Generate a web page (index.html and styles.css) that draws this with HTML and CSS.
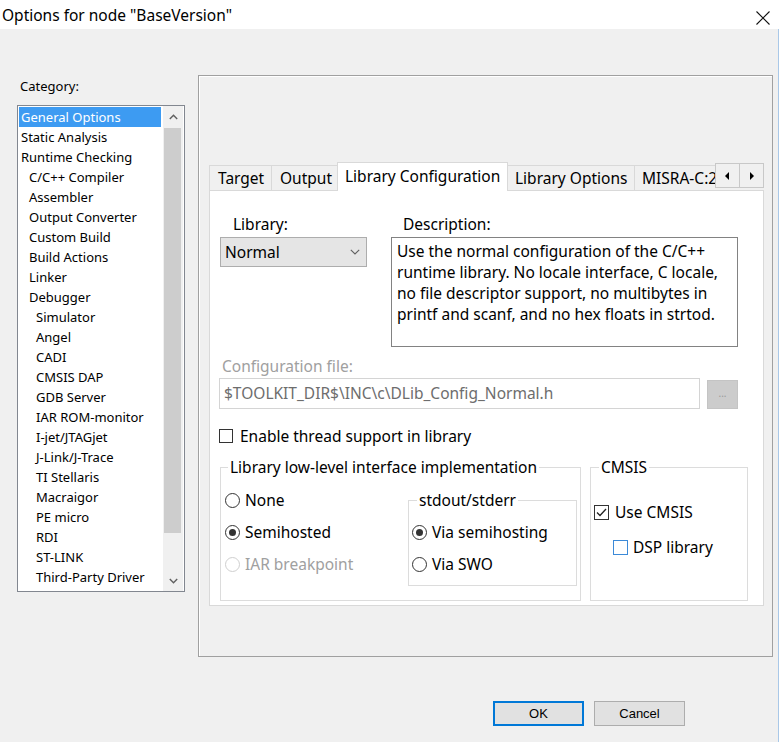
FILE: index.html
```html
<!DOCTYPE html>
<html>
<head>
<meta charset="utf-8">
<title>Options for node "BaseVersion"</title>
<link rel="stylesheet" href="styles.css">
</head>
<body>
<div class="window">
  <div class="titlebar">
    <span class="title">Options for node "BaseVersion"</span>
    <svg class="close" width="14" height="14" viewBox="0 0 14 14"><path d="M0.5 0.5 L13.5 13.5 M13.5 0.5 L0.5 13.5" stroke="#111" stroke-width="1.1" fill="none"/></svg>
  </div>
  <div class="frame">
    <div class="main">
      <div class="content">
        <div class="leftcol">
          <div class="cat-label">Category:</div>
          <div class="listbox">
            <ul class="items">
              <li class="sel l0">General Options</li>
              <li class="l0">Static Analysis</li>
              <li class="l0">Runtime Checking</li>
              <li class="l1">C/C++ Compiler</li>
              <li class="l1">Assembler</li>
              <li class="l1">Output Converter</li>
              <li class="l1">Custom Build</li>
              <li class="l1">Build Actions</li>
              <li class="l1">Linker</li>
              <li class="l1">Debugger</li>
              <li class="l2">Simulator</li>
              <li class="l2">Angel</li>
              <li class="l2">CADI</li>
              <li class="l2">CMSIS DAP</li>
              <li class="l2">GDB Server</li>
              <li class="l2">IAR ROM-monitor</li>
              <li class="l2">I-jet/JTAGjet</li>
              <li class="l2">J-Link/J-Trace</li>
              <li class="l2">TI Stellaris</li>
              <li class="l2">Macraigor</li>
              <li class="l2">PE micro</li>
              <li class="l2">RDI</li>
              <li class="l2">ST-LINK</li>
              <li class="l2">Third-Party Driver</li>
            </ul>
            <div class="vscroll">
              <div class="sbtn"><svg width="9" height="6" viewBox="0 0 9 6"><path d="M0.8 5 L4.5 1.2 L8.2 5" stroke="#606060" stroke-width="1.4" fill="none"/></svg></div>
              <div class="track"><div class="thumb"></div></div>
              <div class="sbtn"><svg width="9" height="6" viewBox="0 0 9 6"><path d="M0.8 1 L4.5 4.8 L8.2 1" stroke="#606060" stroke-width="1.4" fill="none"/></svg></div>
            </div>
          </div>
        </div>

        <div class="panel">
          <div class="tabctl">
            <div class="tabrow">
              <div class="tabs">
                <div class="tab t-target">Target</div>
                <div class="tab t-output">Output</div>
                <div class="tab active t-libconf">Library Configuration</div>
                <div class="tab t-libopt">Library Options</div>
                <div class="tab t-misra">MISRA-C:2004</div>
              </div>
              <div class="arrows">
                <div class="abtn"><svg width="5" height="8" viewBox="0 0 5 8"><path d="M4 0 L0 4 L4 8 Z" fill="#000"/></svg></div>
                <div class="abtn"><svg width="5" height="8" viewBox="0 0 5 8"><path d="M1 0 L5 4 L1 8 Z" fill="#000"/></svg></div>
              </div>
            </div>
            <div class="page">
              <div class="row1">
                <div class="libcol">
                  <div class="lbl lbl-lib">Library:</div>
                  <div class="combo">
                    <span>Normal</span>
                    <svg width="10" height="6" viewBox="0 0 10 6"><path d="M0.8 0.8 L5 5 L9.2 0.8" stroke="#606060" stroke-width="1.1" fill="none"/></svg>
                  </div>
                </div>
                <div class="desccol">
                  <div class="lbl lbl-desc">Description:</div>
                  <div class="desc">Use the normal configuration of the C/C++<br>runtime library. No locale interface, C locale,<br>no file descriptor support, no multibytes in<br>printf and scanf, and no hex floats in strtod.</div>
                </div>
              </div>

              <div class="cfg-label">Configuration file:</div>
              <div class="cfg-row">
                <div class="cfg-field">$TOOLKIT_DIR$\INC\c\DLib_Config_Normal.h</div>
                <div class="browse">...</div>
              </div>

              <div class="check-row thread">
                <span class="cbox"></span>
                <span>Enable thread support in library</span>
              </div>

              <div class="groups">
                <fieldset class="grp grp-ll">
                  <legend>Library low-level interface implementation</legend>
                  <div class="ll-body">
                    <div class="ll-left">
                      <div class="radio-row"><span class="radio"></span><span>None</span></div>
                      <div class="radio-row"><span class="radio on"></span><span>Semihosted</span></div>
                      <div class="radio-row disabled"><span class="radio"></span><span>IAR breakpoint</span></div>
                    </div>
                    <fieldset class="grp grp-std">
                      <legend>stdout/stderr</legend>
                      <div class="radio-row first"><span class="radio on"></span><span>Via semihosting</span></div>
                      <div class="radio-row"><span class="radio"></span><span>Via SWO</span></div>
                    </fieldset>
                  </div>
                </fieldset>
                <fieldset class="grp grp-cmsis">
                  <legend>CMSIS</legend>
                  <div class="check-row use">
                    <span class="cbox checked"><svg width="13" height="13" viewBox="0 0 13 13"><path d="M2 6.5 L5 9.5 L11 3" stroke="#222" stroke-width="1.3" fill="none"/></svg></span>
                    <span>Use CMSIS</span>
                  </div>
                  <div class="check-row dsp">
                    <span class="cbox blue"></span>
                    <span>DSP library</span>
                  </div>
                </fieldset>
              </div>
            </div>
          </div>
        </div>
      </div>

      <div class="buttons">
        <div class="btn ok">OK</div>
        <div class="btn">Cancel</div>
      </div>
    </div>
    <div class="edge"></div>
  </div>
</div>
</body>
</html>
```

FILE: styles.css
```css
* { box-sizing: border-box; }
html, body { margin: 0; padding: 0; }
body {
  width: 784px;
  height: 742px;
  overflow: hidden;
  font-family: "Noto Sans", Roboto, sans-serif;
  color: #000;
  background: #f0f0f0;
}
.window {
  width: 784px;
  height: 742px;
  display: flex;
  flex-direction: column;
}
.titlebar {
  height: 29px;
  background: #fff;
  display: flex;
  align-items: center;
  justify-content: space-between;
  padding: 0 14px 0 2px;
}
.title {
  font-size: 15.5px;
  line-height: 20px;
  margin-top: 0;
}
.close { margin-top: 6px; }

.frame {
  flex: 1;
  display: flex;
}
.main {
  flex: 1;
  background: #f0f0f0;
  display: flex;
  flex-direction: column;
}
.edge {
  width: 6px;
  background: #fff;
  border-left: 1px solid #a9c8e8;
}

.content {
  display: flex;
  padding: 46px 0 0 17px;
}

/* left column */
.leftcol {
  width: 168px;
  display: flex;
  flex-direction: column;
}
.cat-label {
  margin-top: 4px;
  padding-left: 3px;
  font-size: 13px;
  line-height: 15px;
  height: 15px;
}
.listbox {
  margin-top: 11px;
  height: 487px;
  background: #fff;
  border: 1px solid #828790;
  display: flex;
}
.items {
  list-style: none;
  margin: 1px 0 0 1px;
  padding: 0;
  flex: 1;
  font-size: 13px;
}
.items li {
  height: 20px;
  line-height: 20px;
  margin-right: 2px;
  white-space: nowrap;
}
.items li.l0 { padding-left: 2px; }
.items li.l1 { padding-left: 10px; }
.items li.l2 { padding-left: 17px; }
.items li.sel {
  background: #3d9bf2;
  color: #fff;
}
.vscroll {
  width: 20px;
  margin-right: 1px;
  background: #f0f0f0;
  display: flex;
  flex-direction: column;
}
.sbtn {
  height: 21px;
  display: flex;
  align-items: center;
  justify-content: center;
}
.track {
  flex: 1;
  padding: 1px 2px 0 1px;
}
.thumb {
  height: 405px;
  background: #cdcdcd;
}

/* right panel */
.panel {
  margin-left: 13px;
  width: 575px;
  height: 582px;
  border: 1px solid #a0a0a0;
  box-shadow: inset 1px 1px 0 #fff;
  padding: 86px 0 0 10px;
}
.tabctl {
  width: 555px;
  font-size: 15.5px;
}
.tabrow {
  height: 28px;
  display: flex;
  position: relative;
  z-index: 1;
}
.tabs {
  flex: 1;
  display: flex;
  align-items: flex-end;
  overflow: hidden;
  height: 29px;
}
.tab {
  flex: none;
  height: 25px;
  line-height: 24px;
  border: 1px solid #d9d9d9;
  border-bottom: none;
  border-right: none;
  background: #f0f0f0;
  padding-left: 8px;
  white-space: nowrap;
  margin-bottom: 1px;
}
.tab.active {
  height: 29px;
  line-height: 27px;
  background: #fff;
  border-right: 1px solid #d9d9d9;
  margin-bottom: 0;
  padding-left: 7px;
}
.t-target { width: 62px; }
.t-output { width: 66px; border-right: none; }
.t-libconf { width: 171px; }
.t-libopt { width: 126px; border-left: none; padding-left: 7px; }
.t-misra { width: 90px; padding-left: 7px; }
.arrows {
  width: 49px;
  height: 25px;
  margin-top: 1px;
  display: flex;
  border: 1px solid #c8c8c8;
  background: #f0f0f0;
}
.abtn {
  flex: 1;
  display: flex;
  align-items: center;
  justify-content: center;
}
.abtn + .abtn { border-left: 1px solid #c8c8c8; }

.page {
  height: 416px;
  background: #fff;
  border: 1px solid #d9d9d9;
  padding: 23px 0 0 10px;
}
.row1 {
  display: flex;
  gap: 24px;
}
.libcol { width: 147px; }
.desccol { width: 347px; }
.lbl {
  height: 23px;
  line-height: 20px;
}
.lbl-lib { padding-left: 13px; }
.lbl-desc { padding-left: 12px; }
.combo {
  height: 30px;
  background: #e5e5e5;
  border: 1px solid #adadad;
  display: flex;
  align-items: center;
  justify-content: space-between;
  padding: 0 6px 0 4px;
}
.desc {
  height: 110px;
  border: 1px solid #828282;
  padding: 3px 0 0 5px;
  line-height: 21px;
  white-space: nowrap;
}
.cfg-label {
  margin-top: 9px;
  height: 22px;
  line-height: 20px;
  padding-left: 2px;
  color: #a0a0a0;
}
.cfg-row {
  display: flex;
  margin-left: -1px;
  gap: 7px;
  align-items: flex-start;
}
.cfg-field {
  width: 481px;
  height: 31px;
  border: 1px solid #d4d4d4;
  background: #fff;
  color: #6d6d6d;
  line-height: 29px;
  padding-left: 4px;
  white-space: nowrap;
}
.browse {
  width: 31px;
  height: 29px;
  margin-top: 2px;
  background: #cccccc;
  border: 1px solid #c4c4c4;
  color: #9a9a9a;
  font-size: 10px;
  line-height: 24px;
  text-align: center;
}
.check-row {
  display: flex;
  align-items: center;
  height: 20px;
}
.check-row.thread {
  margin-top: 17px;
  margin-left: -1px;
  gap: 7px;
}
.cbox {
  width: 14px;
  height: 14px;
  border: 1px solid #333;
  background: #fff;
  flex: none;
  display: flex;
  align-items: center;
  justify-content: center;
}
.cbox.blue { border-color: #3c8ad8; }

.groups {
  margin-top: 11px;
  display: flex;
  gap: 9px;
  height: 144px;
}
fieldset.grp {
  margin: 0;
  padding: 0;
  border: 1px solid #dcdcdc;
  min-width: 0;
}
fieldset.grp legend {
  line-height: 20px;
  padding: 0 2px;
}
.grp-ll { width: 361px; }
.grp-ll > legend { margin-left: 7px; padding: 0 3px; }
.ll-body {
  display: flex;
  align-items: flex-start;
  padding: 7px 0 0 4px;
}
.ll-left { width: 183px; }
.radio-row {
  height: 32px;
  display: flex;
  align-items: center;
  gap: 5px;
}
.radio {
  width: 15px;
  height: 15px;
  border: 1px solid #333;
  border-radius: 50%;
  background: #fff;
  flex: none;
  display: flex;
  align-items: center;
  justify-content: center;
}
.radio.on::after {
  content: "";
  width: 7px;
  height: 7px;
  border-radius: 50%;
  background: #333;
}
.radio-row.disabled { color: #a0a0a0; }
.radio-row.disabled .radio { border-color: #cfcfcf; }
.grp-std {
  width: 169px;
  height: 96px;
  margin-top: 6px !important;
  padding-left: 3px !important;
}
.grp-std > legend { margin-left: 5px; }
.grp-std .radio-row.first { margin-top: 6px; }

.grp-cmsis { width: 158px; }
.grp-cmsis > legend { margin-left: 8px; }
.check-row.use {
  margin-top: 23px;
  padding-left: 3px;
  height: 24px;
  gap: 6px;
}
.check-row.use .cbox { width: 15px; height: 15px; }
.check-row.dsp {
  margin-top: 11px;
  padding-left: 22px;
  height: 24px;
  gap: 5px;
}
.check-row.dsp .cbox { width: 15px; height: 15px; }

/* buttons */
.buttons {
  margin-top: 44px;
  display: flex;
  justify-content: flex-end;
  gap: 10px;
  padding-right: 93px;
}
.btn {
  width: 91px;
  height: 25px;
  background: #e1e1e1;
  border: 1px solid #adadad;
  font-family: "Liberation Sans", Arial, sans-serif;
  font-size: 13px;
  line-height: 23px;
  text-align: center;
}
.btn.ok {
  border-color: #0078d7;
  box-shadow: inset 0 0 0 1px #0078d7;
}
```
